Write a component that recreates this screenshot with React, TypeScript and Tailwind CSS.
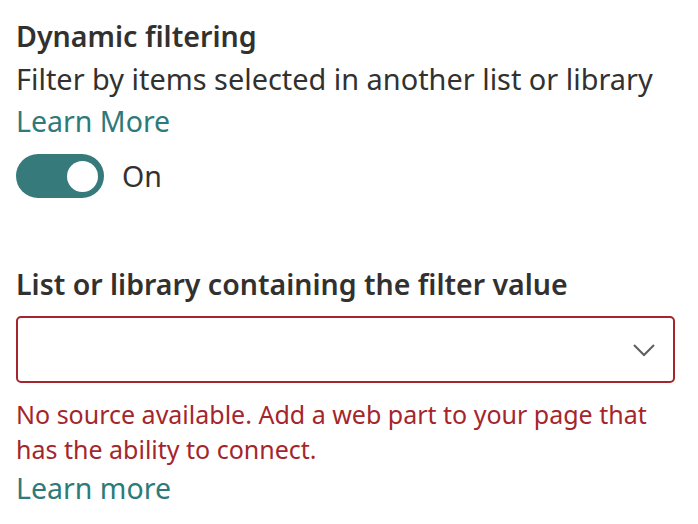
export default function App() {
  return (
    <div
      className="w-[698px] h-[524px] bg-white pl-4 pr-[23px] pt-[14px] text-[#323130]"
      style={{ fontFamily: '"Segoe UI", "Noto Sans", sans-serif' }}
    >
      {/* Dynamic filtering */}
      <div className="text-[28.6px] leading-[43px] font-semibold">Dynamic filtering</div>
      <div className="text-[28.9px] leading-[43px]">Filter by items selected in another list or library</div>
      <div className="text-[28.5px] leading-[43px] text-[#2e7a7b]">Learn More</div>

      {/* Toggle */}
      <div className="flex items-center gap-[18px] mt-[11px]">
        <div className="w-[88px] h-[44px] rounded-full bg-[#367a7b] flex items-center justify-end pr-[6px]">
          <div className="w-[31px] h-[31px] rounded-full bg-white" />
        </div>
        <span className="text-[28.5px] leading-[44px]">On</span>
      </div>

      {/* List or library */}
      <div className="mt-[64px] text-[28.5px] leading-[44px] font-semibold">
        List or library containing the filter value
      </div>
      <div className="mt-[10px] h-[67px] border-2 border-[#a4262c] rounded-[5px] flex items-center justify-end pr-[18px]">
        <svg width="22" height="14" viewBox="0 0 22 14" fill="none">
          <path d="M1 2 L11 12 L21 2" stroke="#605e5c" strokeWidth="2" />
        </svg>
      </div>
      <div className="mt-[14px] text-[25px] leading-[35px] text-[#a4262c]">
        No source available. Add a web part to your page that has the ability to connect.
      </div>
      <div className="text-[28.5px] leading-[42px] text-[#2e7a7b]">Learn more</div>
    </div>
  )
}
